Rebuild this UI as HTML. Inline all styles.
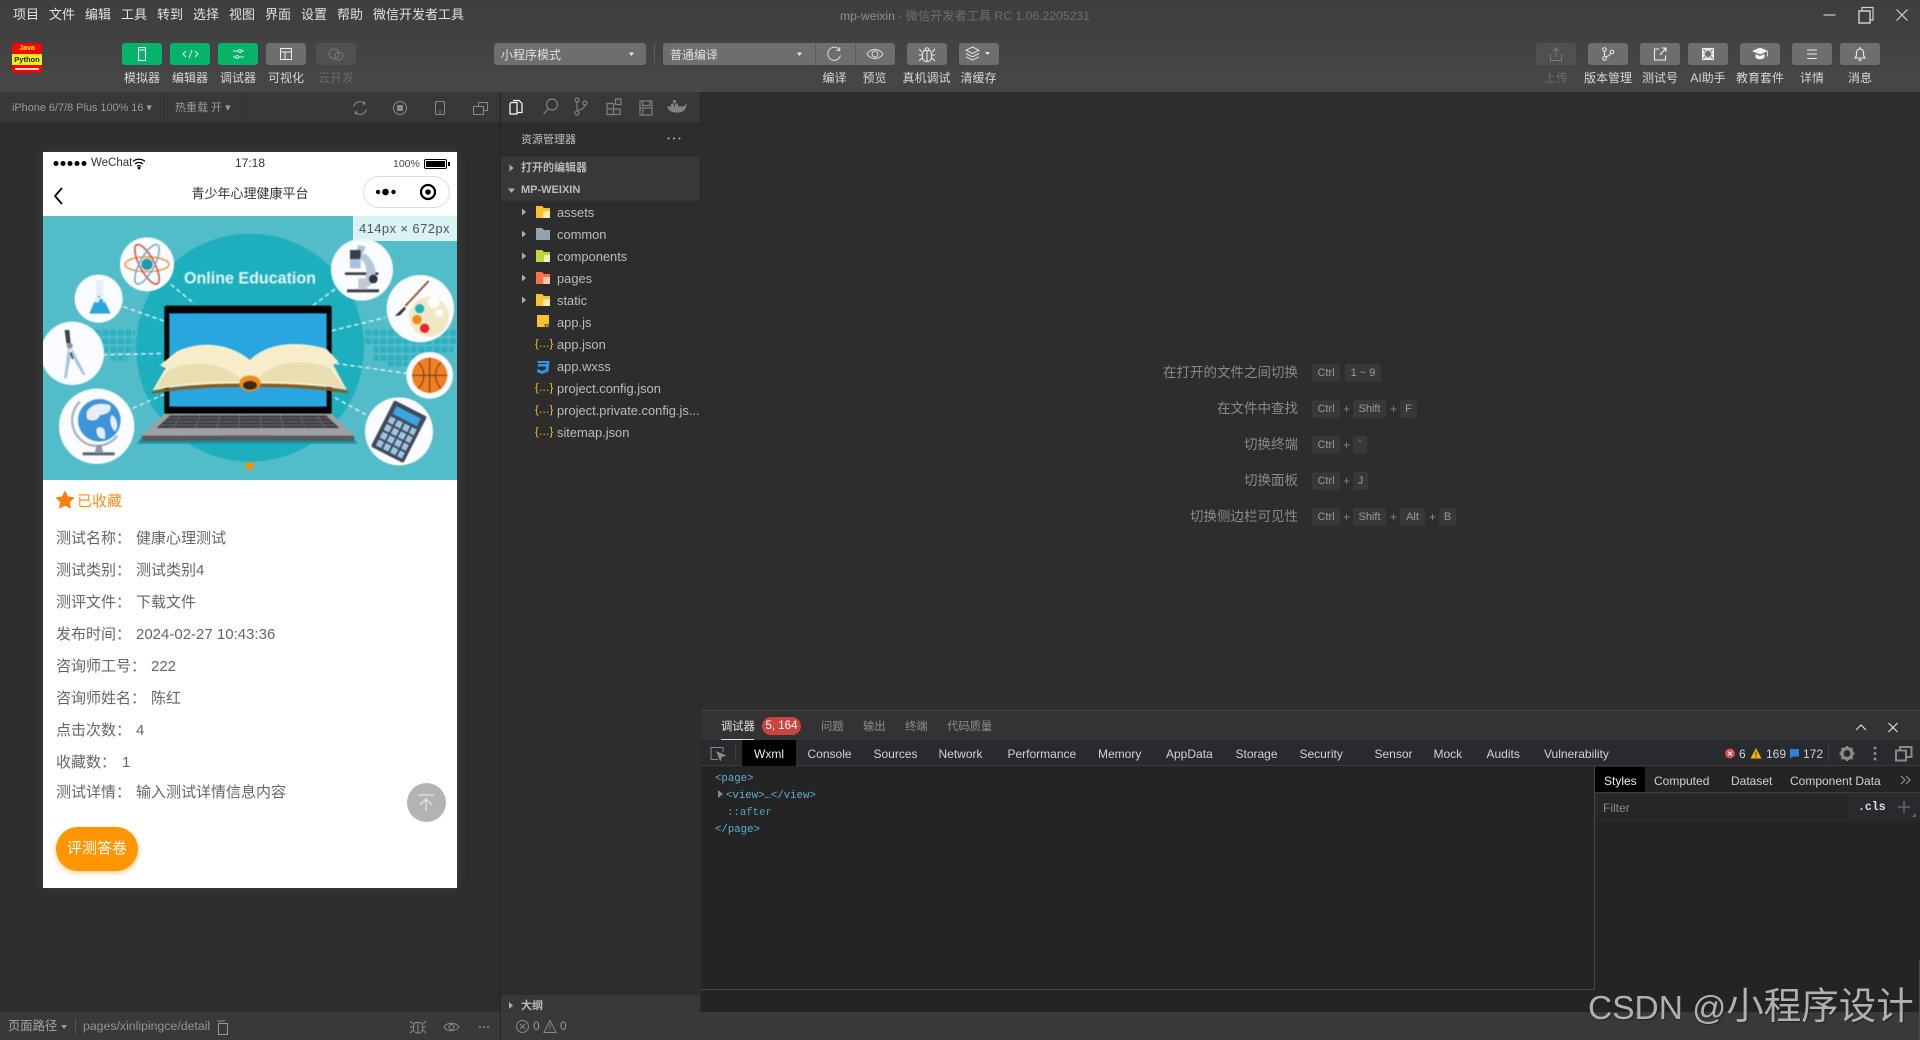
<!DOCTYPE html>
<html lang="zh"><head><meta charset="utf-8"><title>mp-weixin</title>
<style>
*{box-sizing:border-box}
html,body{margin:0;padding:0;width:1920px;height:1040px;overflow:hidden;background:#2d2d2d}
body{position:relative;font-family:"Liberation Sans","Noto Sans CJK SC",sans-serif;color:#ccc}
.a,.t{position:absolute}
.t{white-space:nowrap;line-height:20px;height:20px}
.c{transform:translateX(-50%)}
.r{transform:translateX(-100%)}
svg{position:absolute;overflow:visible}
.m{font-size:13px;color:#e2e2e2;top:5px}
.l{font-size:12px;color:#d8d8d8;top:68px}
.b{position:absolute;top:43px;height:22px;border-radius:3px;background:#6e6e6e}
.g{background:#07b26a}
.f{font-size:12.900px;color:#b9bdc0;left:557px;margin-top:1px}
.k{position:absolute;height:18px;line-height:18px;background:#383838;border-radius:2px;font-size:11px;color:#9a9a9a;text-align:center}
.kl{font-size:13.500px;color:#8a8a8a;left:1298px;transform:translateX(-100%);margin-top:1px}
.p{font-size:11px;color:#9a9a9a;margin-top:1px}
.d{font-size:12px;color:#cfd3d6;top:744px}
.x{font-family:"Liberation Mono",monospace;font-size:10.700px;color:#5db0d7;margin-top:1px}
.q{font-size:15px;color:#666;left:56px;margin-top:1px}
.v{font-size:15px;color:#666;margin-top:1px}
.tb{font-size:11.300px;color:#8f8f8f;top:717px}
</style></head><body>

<!-- top bars -->
<div class="a" style="left:0;top:0;width:1920px;height:92px;background:linear-gradient(#3e3e3e,#474747)"></div>
<div class="a" style="left:0;top:92px;width:700px;height:30px;background:#383838"></div>
<div class="a" style="left:163px;top:92px;width:1px;height:30px;background:#343434"></div>
<div class="a" style="left:242px;top:92px;width:1px;height:30px;background:#343434"></div>
<div class="a" style="left:500px;top:92px;width:1px;height:948px;background:#232323"></div>
<div class="a" style="left:700px;top:92px;width:1px;height:618px;background:#282828"></div>

<span class="t m" style="left:13px">项目</span><span class="t m" style="left:49px">文件</span><span class="t m" style="left:85px">编辑</span><span class="t m" style="left:121px">工具</span><span class="t m" style="left:157px">转到</span><span class="t m" style="left:193px">选择</span><span class="t m" style="left:229px">视图</span><span class="t m" style="left:265px">界面</span><span class="t m" style="left:301px">设置</span><span class="t m" style="left:337px">帮助</span><span class="t m" style="left:373px">微信开发者工具</span>
<span class="t" style="left:840px;top:6px;font-size:12.200px;color:#8d8f92">mp-weixin <span style="color:#6f6f6f">- 微信开发者工具 RC 1.06.2205231</span></span>

<!-- window controls -->
<svg style="left:1820px;top:4px" width="100" height="24" fill="none" stroke="#d0d0d0" stroke-width="1.200">
<path d="M3.500 11h12" stroke="#aaa" stroke-width="1.600"/>
<path d="M39 7h11v12h-11z" stroke-width="1.400"/><path d="M42 7V3.500h11V16h-3" stroke-width="1.200"/>
<path d="M76.500 5.500l11 11M87.500 5.500l-11 11"/></svg>

<!-- logo -->
<div class="a" style="left:12px;top:43px;width:30px;height:30px;background:#f00;border-radius:3px;overflow:hidden">
<div class="a" style="left:0;top:11px;width:30px;height:11px;background:#f3ee1b"></div>
<span class="a" style="left:0;width:30px;text-align:center;top:1px;font-size:7px;line-height:9px;font-weight:bold;color:#ff0">Java</span>
<span class="a" style="left:0;width:30px;text-align:center;top:12px;font-size:7.500px;line-height:9px;font-weight:bold;color:#222">Python</span>
<div class="a" style="left:3px;top:25px;width:24px;height:1.500px;background:#fff;opacity:.85"></div>
</div>

<!-- left buttons -->
<div class="b g" style="left:122px;width:40px"><svg style="left:16px;top:4px" width="9" height="14" fill="none" stroke="#fff" stroke-width="1"><rect x=".5" y=".5" width="7" height="13"/><path d="M.5 3h7"/></svg></div>
<div class="b g" style="left:170px;width:40px"><svg style="left:12px;top:6px" width="17" height="10" fill="none" stroke="#fff" stroke-width="1"><path d="M4 2L1 5l3 3M13 2l3 3-3 3M10 1L7 9"/></svg></div>
<div class="b g" style="left:218px;width:40px"><svg style="left:15px;top:5px" width="11" height="12" fill="none" stroke="#d8f5e6" stroke-width="1"><path d="M0 3h5M9 3h2M0 9h2M6 9h5"/><circle cx="7" cy="3" r="1.500"/><circle cx="4" cy="9" r="1.500"/></svg></div>
<div class="b" style="left:266px;width:40px"><svg style="left:14px;top:5px" width="13" height="13" fill="none" stroke="#eee" stroke-width="1"><rect x=".5" y=".5" width="11" height="11"/><path d="M.5 4h11M5 4v7.500"/></svg></div>
<div class="b" style="left:316px;width:40px;background:#505050"><svg style="left:12px;top:5px" width="16" height="13" fill="none" stroke="#7a7a7a" stroke-width="1"><circle cx="6" cy="6" r="5"/><circle cx="11" cy="8" r="4"/></svg></div>
<span class="t l c" style="left:142px">模拟器</span><span class="t l c" style="left:190px">编辑器</span><span class="t l c" style="left:238px">调试器</span><span class="t l c" style="left:286px">可视化</span><span class="t l c" style="left:336px;color:#6b6b6b">云开发</span>

<!-- mode selects -->
<div class="b" style="left:494px;width:152px"></div>
<span class="t" style="left:501px;top:45px;font-size:12px;color:#e0e0e0;height:20px">小程序模式</span>
<svg style="left:628px;top:52px" width="8" height="5" fill="#e8e8e8"><path d="M1 .5h5L3.500 4z"/></svg>
<div class="a" style="left:654px;top:43px;width:1px;height:22px;background:#5a5a5a"></div>
<div class="b" style="left:663px;width:232px"></div>
<div class="a" style="left:815px;top:43px;width:1px;height:22px;background:#5c5c5c"></div>
<div class="a" style="left:855px;top:43px;width:1px;height:22px;background:#5c5c5c"></div>
<span class="t" style="left:670px;top:45px;font-size:12px;color:#e0e0e0">普通编译</span>
<svg style="left:796px;top:52px" width="8" height="5" fill="#e8e8e8"><path d="M1 .5h5L3.500 4z"/></svg>
<svg style="left:826px;top:46px" width="18" height="16" fill="none" stroke="#ddd" stroke-width="1"><path d="M13.500 4A6.500 6.500 0 1 0 14.500 9.500"/><path d="M13.800 1v3.500h-3.500"/></svg>
<svg style="left:866px;top:47px" width="18" height="14" fill="none" stroke="#ddd" stroke-width="1"><path d="M1 7c4-6 12-6 16 0-4 6-12 6-16 0z"/><circle cx="9" cy="7" r="3"/></svg>
<div class="b" style="left:907px;width:40px"></div>
<svg style="left:918px;top:46px" width="18" height="17" fill="none" stroke="#e4e4e4" stroke-width="1.100"><path d="M6 4.500h6l1.500 3v4.500c0 2-2 3.500-4.500 3.500S4.500 14 4.500 12V7.500zM7 4c0-3 4-3 4 0M9 5v10M1 3l3 3M17 3l-3 3M1 9h3M14 9h3M1 15l3-3M17 15l-3-3"/></svg>
<div class="b" style="left:959px;width:40px"></div>
<svg style="left:965px;top:46px" width="28" height="16" fill="none" stroke="#e4e4e4" stroke-width="1"><path d="M7.500 1L14 4.200 7.500 7.500 1 4.200zM1 7.500l6.500 3.300L14 7.500M1 10.800l6.500 3.300 6.500-3.300"/><path d="M20 6h5l-2.500 3z" fill="#e4e4e4" stroke="none"/></svg>
<span class="t l c" style="left:834.500px">编译</span><span class="t l c" style="left:874.500px">预览</span><span class="t l c" style="left:926.500px">真机调试</span><span class="t l c" style="left:978.500px">清缓存</span>

<!-- right buttons -->
<div class="b" style="left:1536px;width:40px;background:#505050"></div><div class="b" style="left:1588px;width:40px"></div><div class="b" style="left:1640px;width:40px"></div><div class="b" style="left:1688px;width:40px"></div><div class="b" style="left:1740px;width:40px"></div><div class="b" style="left:1792px;width:40px"></div><div class="b" style="left:1840px;width:40px"></div>
<svg style="left:1536px;top:43px" width="40" height="22" fill="none" stroke="#7c7c7c" stroke-width="1"><path d="M14.500 11v6.500h11V11M20 14V5M17 8l3-3 3 3"/></svg>
<svg style="left:1588px;top:43px" width="40" height="22" fill="none" stroke="#eee" stroke-width="1"><circle cx="16.500" cy="6.500" r="1.800"/><circle cx="16.500" cy="15.500" r="1.800"/><circle cx="24" cy="9" r="1.800"/><path d="M16.500 8.300v5.400M18 13.500c3 0 4-1.500 4.500-3.500"/></svg>
<svg style="left:1640px;top:43px" width="40" height="22" fill="none" stroke="#eee" stroke-width="1.100"><path d="M19 6h-4.500v11h11v-4.500M20 12l6-7M22 5h4v4"/></svg>
<svg style="left:1688px;top:43px" width="40" height="22" fill="none" stroke="#eee" stroke-width="1"><rect x="14.500" y="5.500" width="11" height="11"/><ellipse cx="20" cy="11" rx="5.500" ry="3.500" transform="rotate(45 20 11)"/><ellipse cx="20" cy="11" rx="5.500" ry="3.500" transform="rotate(-45 20 11)"/></svg>
<svg style="left:1740px;top:43px" width="40" height="22" fill="#f2f2f2"><path d="M12 8l8-3.500L28 8l-8 3.500z"/><path d="M15.500 11v3.500c2.500 2.500 6.500 2.500 9 0V11L20 13zM27 8.500h.8v5H27z"/></svg>
<svg style="left:1792px;top:43px" width="40" height="22" fill="none" stroke="#eee" stroke-width="1.100"><path d="M15 7h10M15 11h10M15 15.500h10"/></svg>
<svg style="left:1840px;top:43px" width="40" height="22" fill="none" stroke="#eee" stroke-width="1.100"><path d="M15 15c1.500-1.500 1.500-3 1.500-5.500a3.500 3.500 0 0 1 7 0c0 2.500 0 4 1.500 5.500zM20 4v2"/><path d="M18.500 17h3" stroke-width="1.500"/></svg>
<span class="t l c" style="left:1556px;color:#6b6b6b">上传</span><span class="t l c" style="left:1608px">版本管理</span><span class="t l c" style="left:1660px">测试号</span><span class="t l c" style="left:1708px">AI助手</span><span class="t l c" style="left:1760px">教育套件</span><span class="t l c" style="left:1812px">详情</span><span class="t l c" style="left:1860px">消息</span>

<!-- sub toolbar -->
<span class="t p" style="left:12px;top:97px;font-size:10.900px">iPhone 6/7/8 Plus 100% 16 ▾</span>
<span class="t p" style="left:175px;top:97px;font-size:11px">热重载 开 ▾</span>
<svg style="left:350px;top:97px" width="140" height="20" fill="none" stroke="#8a8a8a" stroke-width="1">
<path d="M3.700 9.500A6.500 6.500 0 0 1 14.500 6.500M14.800 4.500v2.500h-2.500M16.300 12.500A6.500 6.500 0 0 1 5.500 15.500M5.200 17.500v-2.500h2.500"/>
<circle cx="50" cy="11" r="6.500"/><rect x="47" y="8" width="6" height="6" fill="#8a8a8a" stroke="none"/>
<rect x="85.500" y="4.500" width="9" height="13" rx="1"/><path d="M88.500 15h3"/>
<rect x="128.500" y="5.500" width="9" height="8"/><rect x="123.500" y="9.500" width="10" height="8" fill="#383838"/></svg>
<svg style="left:508px;top:96px" width="185" height="22" fill="none" stroke="#808080" stroke-width="1.200">
<path d="M5 4.500h6l3 3v9h-5" stroke="#fff"/><path d="M3 6.500h6v11.500h-7v-10z" stroke="#fff"/>
<g transform="translate(-1 0)"><circle cx="45" cy="8.500" r="5.500"/><path d="M41 13l-4.500 5"/></g>
<g transform="translate(3 0)"><circle cx="66" cy="4" r="2"/><circle cx="66" cy="17" r="2"/><circle cx="74" cy="7" r="2"/><path d="M66 6v9M67.500 14c4 0 5.500-2 6.500-5"/></g>
<g transform="translate(3 0)"><path d="M96 7.500h6.500v5.500H96zM96 13h6.500v5.500H96zM102.500 13H109v5.500h-6.500zM104.500 3h5.500v5.500h-5.500z"/></g>
<g transform="translate(1 0)"><path d="M131 5h12v14h-12zM133.500 5v4.500h7.500V5M131 12h12M134 12v7"/></g>
<g transform="translate(-1 0)"><path d="M161 11h15c1 0 3-1 3-3 0 5-3 8-9 8s-8-2-9-5z" fill="#808080"/><rect x="164" y="7.500" width="3" height="3" fill="#808080" stroke="none"/><rect x="168" y="7.500" width="3" height="3" fill="#808080" stroke="none"/><rect x="166" y="4" width="3" height="3" fill="#808080" stroke="none"/></g></svg>

<!-- explorer -->
<span class="t" style="left:521px;top:130px;font-size:11px;color:#c2c2c2">资源管理器</span>
<svg style="left:666px;top:136px" width="16" height="6" fill="#bbb"><circle cx="2.500" cy="2.500" r="1"/><circle cx="8" cy="2.500" r="1"/><circle cx="13.500" cy="2.500" r="1"/></svg>
<div class="a" style="left:501px;top:157px;width:199px;height:44px;background:#383838"></div>
<span class="t" style="left:521px;top:158px;font-size:11px;font-weight:bold;color:#b8b8b8">打开的编辑器</span>
<span class="t" style="left:521px;top:180px;font-size:11px;font-weight:bold;color:#b8bcc0">MP-WEIXIN</span>
<svg style="left:507px;top:160px" width="28" height="240" fill="#a8a8a8"><path d="M2.500 4.500l4 3.500-4 3.500zM1 28.500h7L4.500 33zM15 48.500l4 3.500-4 3.500zM15 70.500l4 3.500-4 3.500zM15 92.500l4 3.500-4 3.500zM15 114.500l4 3.500-4 3.500zM15 136.500l4 3.500-4 3.500z" fill="#9fb4c4"/></svg>

<svg style="left:536px;top:205px" width="16" height="240" stroke="none">
<path d="M0 1h6l2 2h6v10H0z" fill="#fbc02d"/><rect x="7" y="6" width="7" height="7" fill="#ffe9a8"/>
<path d="M0 23h6l2 2h6v10H0z" fill="#90a4ae"/>
<path d="M0 45h6l2 2h6v10H0z" fill="#c5d33a"/><rect x="8" y="50" width="6" height="7" fill="#eef3b5"/>
<path d="M0 67h6l2 2h6v10H0z" fill="#ff7043"/><rect x="7" y="72" width="7" height="7" fill="#ffc5b0"/>
<path d="M0 89h6l2 2h6v10H0z" fill="#fbc02d"/><rect x="7" y="94" width="7" height="7" fill="#ffe9a8"/>
<rect x="1" y="110" width="12" height="12" fill="#fbc02d"/>
<path d="M1.500 156h12l-1 10.500-6.500 2.500-5-2 .4-3 4.600 1.700 3.700-1.500.4-2.700H1.800l.3-2.500h8.500l.3-1H1.500z" fill="#2d97e5"/>
</svg>
<span class="t" style="font-size:5.500px;font-weight:bold;color:#333;left:543px;top:317px">JS</span>
<span class="t f" style="top:202px">assets</span><span class="t f" style="top:224px">common</span><span class="t f" style="top:246px">components</span><span class="t f" style="top:268px">pages</span><span class="t f" style="top:290px">static</span><span class="t f" style="top:312px">app.js</span><span class="t f" style="top:334px">app.json</span><span class="t f" style="top:356px">app.wxss</span><span class="t f" style="top:378px">project.config.json</span><span class="t f" style="top:400px">project.private.config.js...</span><span class="t f" style="top:422px">sitemap.json</span>
<span class="t" style="left:535px;top:334px;font-size:11px;color:#fbc02d">{…}</span>
<span class="t" style="left:535px;top:378px;font-size:11px;color:#fbc02d">{…}</span>
<span class="t" style="left:535px;top:400px;font-size:11px;color:#fbc02d">{…}</span>
<span class="t" style="left:535px;top:422px;font-size:11px;color:#fbc02d">{…}</span>

<div class="a" style="left:501px;top:995px;width:199px;height:17px;background:#383838"></div>
<svg style="left:509px;top:1002px" width="6" height="8" fill="#9fb4c4"><path d="M0 0l4 3.500L0 7z"/></svg>
<span class="t" style="left:521px;top:998px;font-size:11px;height:17px;line-height:17px;font-weight:bold;color:#bbb">大纲</span>

<!-- Shortcuts -->
<span class="t kl" style="top:362px">在打开的文件之间切换</span><span class="t kl" style="top:398px">在文件中查找</span><span class="t kl" style="top:434px">切换终端</span><span class="t kl" style="top:470px">切换面板</span><span class="t kl" style="top:506px">切换侧边栏可见性</span>
<div class="k" style="left:1312px;top:364px;width:28px">Ctrl</div><div class="k" style="left:1345px;top:364px;width:36px">1 ~ 9</div>
<div class="k" style="left:1312px;top:400px;width:28px">Ctrl</div><span class="t" style="left:1343px;top:399px;font-size:12px;color:#888">+</span><div class="k" style="left:1353px;top:400px;width:33px">Shift</div><span class="t" style="left:1390px;top:399px;font-size:12px;color:#888">+</span><div class="k" style="left:1400px;top:400px;width:17px">F</div>
<div class="k" style="left:1312px;top:436px;width:28px">Ctrl</div><span class="t" style="left:1343px;top:435px;font-size:12px;color:#888">+</span><div class="k" style="left:1353px;top:436px;width:14px">`</div>
<div class="k" style="left:1312px;top:472px;width:28px">Ctrl</div><span class="t" style="left:1343px;top:471px;font-size:12px;color:#888">+</span><div class="k" style="left:1353px;top:472px;width:15px">J</div>
<div class="k" style="left:1312px;top:508px;width:28px">Ctrl</div><span class="t" style="left:1343px;top:507px;font-size:12px;color:#888">+</span><div class="k" style="left:1353px;top:508px;width:33px">Shift</div><span class="t" style="left:1390px;top:507px;font-size:12px;color:#888">+</span><div class="k" style="left:1400px;top:508px;width:25px">Alt</div><span class="t" style="left:1429px;top:507px;font-size:12px;color:#888">+</span><div class="k" style="left:1439px;top:508px;width:17px">B</div>

<!-- debug panel -->
<div class="a" style="left:701px;top:710px;width:1219px;height:30px;background:#333;border-top:1px solid #444"></div>
<span class="t tb" style="left:721px;color:#e2e2e2">调试器</span><div class="a" style="left:721px;top:739px;width:33px;height:1px;background:#ddd"></div>
<div class="a" style="left:762px;top:717px;width:39px;height:18px;border-radius:9px;background:#c9453d;color:#fff;font-size:11.500px;line-height:18px;text-align:center">5, 164</div>
<span class="t tb" style="left:821px">问题</span><span class="t tb" style="left:863px">输出</span><span class="t tb" style="left:905px">终端</span><span class="t tb" style="left:947px">代码质量</span>
<svg style="left:1852px;top:721px" width="60" height="14" fill="none" stroke="#ddd" stroke-width="1.200"><path d="M4 9l5-5 5 5M36.500 2l9 9M45.500 2l-9 9"/></svg>
<div class="a" style="left:701px;top:740px;width:1219px;height:26px;background:#292a2d;border-bottom:1px solid #3c3c3c"></div>
<div class="a" style="left:701px;top:766px;width:1219px;height:246px;background:#242424"></div>
<svg style="left:710px;top:746px" width="18" height="16" fill="none" stroke="#8a8a8a" stroke-width="1"><path d="M8 13.500H1V1.500h12V6"/><path d="M7 6l8 3.500-3.500 1.200-1.200 3.500z" fill="#8a8a8a"/></svg>
<div class="a" style="left:735px;top:744px;width:1px;height:18px;background:#3c3c3c"></div>
<div class="a" style="left:742px;top:740px;width:54px;height:26px;background:#000"></div>
<span class="t d" style="left:754px;color:#eee">Wxml</span><span class="t d" style="left:807.500px">Console</span><span class="t d" style="left:873.500px">Sources</span><span class="t d" style="left:938.500px">Network</span><span class="t d" style="left:1007.500px">Performance</span><span class="t d" style="left:1098px">Memory</span><span class="t d" style="left:1166px">AppData</span><span class="t d" style="left:1235.500px">Storage</span><span class="t d" style="left:1299.500px">Security</span><span class="t d" style="left:1374.500px">Sensor</span><span class="t d" style="left:1433.500px">Mock</span><span class="t d" style="left:1486.500px">Audits</span><span class="t d" style="left:1544px">Vulnerability</span>

<svg style="left:1724px;top:747px" width="80" height="14"><circle cx="6" cy="6.500" r="5" fill="#e5484d"/><path d="M4 4.500l4 4M8 4.500l-4 4" stroke="#fff" stroke-width="1.200"/><path d="M32 1l5.500 10.500h-11z" fill="#f4b400"/><path d="M32 4.500v4M32 9.500v1" stroke="#292a2d" stroke-width="1"/><path d="M66 2h9v7.500h-6l-3 2z" fill="#2f7fe0"/></svg>
<span class="t d" style="left:1739px;font-size:12px">6</span><span class="t d" style="left:1766px">169</span><span class="t d" style="left:1803px">172</span>
<div class="a" style="left:1828px;top:744px;width:1px;height:18px;background:#3c3c3c"></div>
<svg style="left:1838px;top:745px" width="78" height="18" fill="#8a8a8a"><circle cx="9" cy="8.500" r="5" fill="none" stroke="#8a8a8a" stroke-width="3.200"/><path d="M9 1v3M9 13v3M1.500 8.500h3M13.500 8.500h3M3.500 3l2 2M12.500 12l2 2M14.500 3l-2 2M5.500 12l-2 2" stroke="#8a8a8a" stroke-width="2"/><circle cx="37" cy="3" r="1.500"/><circle cx="37" cy="8.500" r="1.500"/><circle cx="37" cy="14" r="1.500"/><path d="M58 5.500h10v10H58zM62 5V2h11.500v10H69" fill="none" stroke="#8a8a8a" stroke-width="2"/></svg>

<span class="t x" style="left:715px;top:768px">&lt;page&gt;</span>
<svg style="left:718px;top:790px" width="6" height="9" fill="#888"><path d="M0 0l5 4-5 4z"/></svg>
<span class="t x" style="left:726px;top:785px">&lt;view&gt;<span style="color:#aaa">…</span>&lt;/view&gt;</span>
<span class="t x" style="left:727px;top:802px;color:#4f9fb8">::after</span>
<span class="t x" style="left:715px;top:819px">&lt;/page&gt;</span>

<div class="a" style="left:701px;top:989px;width:894px;height:1px;background:#484848"></div>
<div class="a" style="left:1594px;top:766px;width:1px;height:224px;background:#444"></div>
<div class="a" style="left:1595px;top:793px;width:325px;height:28px;background:#292a2d"></div>
<div class="a" style="left:1595px;top:792px;width:325px;height:1px;background:#3c3c3c"></div>
<div class="a" style="left:1598px;top:795px;width:250px;height:24px;background:#262626"></div>
<div class="a" style="left:1595px;top:767px;width:50px;height:25px;background:#000"></div>
<span class="t d" style="left:1604px;top:771px;color:#eee">Styles</span><span class="t d" style="left:1654px;top:771px">Computed</span><span class="t d" style="left:1731px;top:771px">Dataset</span><span class="t d" style="left:1790px;top:771px">Component Data</span>
<svg style="left:1900px;top:775px" width="12" height="10" fill="none" stroke="#999"><path d="M1 1l4 4-4 4M6 1l4 4-4 4"/></svg>
<span class="t" style="left:1603px;top:798px;font-size:12px;color:#8a8a8a">Filter</span>
<span class="t x" style="left:1858px;top:797px;font-size:11.500px;font-weight:bold;color:#ddd">.cls</span>
<svg style="left:1897px;top:800px" width="20" height="18" fill="none" stroke="#666" stroke-width="1.500"><path d="M7 1v12M1 7h12"/><path d="M19 13v4h-4z" fill="#666" stroke="none"/></svg>

<!-- status bar -->
<div class="a" style="left:0;top:1012px;width:1920px;height:28px;background:#393939"></div>
<div class="a" style="left:500px;top:1012px;width:1px;height:28px;background:#232323"></div>
<span class="t p" style="left:8px;top:1015px;font-size:12.300px;color:#a5a5a5">页面路径</span>
<svg style="left:61px;top:1025px" width="7" height="5" fill="#999"><path d="M0 0h6L3 4z"/></svg>
<div class="a" style="left:75px;top:1019px;width:1px;height:15px;background:#555"></div>
<span class="t p" style="left:83px;top:1015px;font-size:12.300px;color:#949494">pages/xinlipingce/detail</span>
<svg style="left:216px;top:1020px" width="14" height="15" fill="none" stroke="#999" stroke-width="1"><path d="M2.500 3.500h9v11h-9zM1 1h8"/></svg>
<svg style="left:409px;top:1018px" width="95" height="17" fill="none" stroke="#8a8a8a" stroke-width="1"><path d="M6 4.500h6l1.500 3v4c0 2-2 3.500-4.500 3.500S4.500 13.500 4.500 11.500v-4zM9 5v10M1 3l3 3M17 3l-3 3M1 9h3M14 9h3M1 15l3-3M17 15l-3-3"/><path d="M35 9c3-5 11-5 15 0-4 5-12 5-15 0z"/><circle cx="42.500" cy="9" r="2.500"/><circle cx="71" cy="9" r="1" fill="#8a8a8a" stroke="none"/><circle cx="75" cy="9" r="1" fill="#8a8a8a" stroke="none"/><circle cx="79" cy="9" r="1" fill="#8a8a8a" stroke="none"/></svg>
<svg style="left:516px;top:1019px" width="60" height="15" fill="none" stroke="#8a8a8a" stroke-width="1"><circle cx="6.500" cy="7.500" r="6"/><path d="M4 5l5 5M9 5l-5 5M34 1.500l6 12H28zM34 5.500v4M34 11v1"/></svg>
<span class="t p" style="left:533px;top:1015px;font-size:12px">0</span><span class="t p" style="left:560px;top:1015px;font-size:12px">0</span>

<!-- simulator phone -->
<div class="a" style="left:43px;top:152px;width:414px;height:736px;background:#fff;box-shadow:0 0 14px rgba(255,255,255,.09)"></div>
<svg style="left:53px;top:160px" width="36" height="7" fill="#000"><circle cx="3" cy="3.500" r="2.500"/><circle cx="10" cy="3.500" r="2.500"/><circle cx="17" cy="3.500" r="2.500"/><circle cx="24" cy="3.500" r="2.500"/><circle cx="31" cy="3.500" r="2.500"/></svg>
<span class="t" style="left:91px;top:153px;font-size:11.500px;color:#333">WeChat</span>
<svg style="left:132px;top:158px" width="14" height="11" fill="none" stroke="#000" stroke-width="1.200"><path d="M1 3.500c3-3 9-3 12 0M3 6c2-2 6-2 8 0M5 8.300c1-1 3-1 4 0"/><circle cx="7" cy="10" r=".8" fill="#000"/></svg>
<span class="t c" style="left:250px;top:153px;font-size:12px;color:#333">17:18</span>
<span class="t" style="left:393px;top:154px;font-size:10.500px;color:#444">100%</span>
<div class="a" style="left:424px;top:159px;width:23px;height:10px;border:1px solid #000;border-radius:2px;padding:1px"><div style="width:100%;height:100%;background:#000"></div></div>
<div class="a" style="left:448px;top:162px;width:1.500px;height:4px;background:#000"></div>
<span class="t c" style="left:250px;top:184px;font-size:13px;color:#333">青少年心理健康平台</span>
<svg style="left:52px;top:186px" width="13" height="20" fill="none" stroke="#000" stroke-width="1.800"><path d="M10 2L3 10l7 8"/></svg>
<div class="a" style="left:363px;top:176px;width:87px;height:32px;border:1px solid #ddd;border-radius:16px;background:#fff"></div>
<svg style="left:373px;top:182px" width="72" height="20"><circle cx="5" cy="10" r="2.200"/><circle cx="12.500" cy="10" r="3.300"/><circle cx="20.500" cy="10" r="2.200"/><circle cx="55" cy="10" r="7" fill="none" stroke="#000" stroke-width="2.200"/><circle cx="55" cy="10" r="2.800"/></svg>

<!-- swiper image -->
<div class="a" style="left:43px;top:216px;width:414px;height:264px;overflow:hidden;background:#52bdc9">
<svg style="left:-3px;top:-1px;filter:blur(.45px)" width="420" height="270" viewBox="0 0 1260 810">
<rect width="1260" height="810" fill="#52bdc9"/>
<circle cx="630" cy="398" r="342" fill="#1dafbe"/>
<g fill="#2db0c1"><path d="M165 345h120v17H165zM165 370h120v17H165zM165 395h120v17H165zM212 420h50v17h-50z" stroke="#52bdc9" stroke-width="0"/>
<path d="M975 345h275v17H975zM975 370h275v17H975zM1000 395h240v17h-240zM1000 420h180v17h-180zM1040 440h100v14h-100z"/></g>
<g stroke="#52bdc9" stroke-width="5"><path d="M185 340v100M208 340v100M231 340v100M254 340v100M277 340v100M995 340v120M1018 340v120M1041 340v120M1064 340v120M1087 340v120M1110 340v120M1133 340v120M1156 340v120M1179 340v120M1202 340v120M1225 340v120"/></g>
<g stroke="#e6f6f7" stroke-width="4" stroke-dasharray="14 9" fill="none"><path d="M392 208L465 268M250 275L372 318M188 420L372 415M278 580L372 538M885 222L818 272M875 347L1035 308M885 445L1100 475M885 548L985 603"/></g>
<g fill="#fbfcff"><circle cx="321" cy="148" r="81"/><circle cx="176" cy="251" r="72"/><circle cx="97" cy="415" r="95"/><circle cx="170" cy="634" r="113"/><circle cx="966" cy="164" r="93"/><circle cx="1141" cy="281" r="101"/><circle cx="1169" cy="481" r="70"/><circle cx="1077" cy="649" r="102"/></g>
<!-- atom -->
<g fill="none" stroke-width="5"><ellipse cx="321" cy="148" rx="66" ry="22" stroke="#ef9a4a"/><ellipse cx="321" cy="148" rx="66" ry="22" stroke="#d9534a" transform="rotate(62 321 148)"/><ellipse cx="321" cy="148" rx="66" ry="22" stroke="#7aaccc" transform="rotate(-62 321 148)"/></g><circle cx="321" cy="148" r="17" fill="#1f9aa6"/>
<!-- flask -->
<path d="M168 196h22v50l22 50h-64l20-50z" fill="#e3eef6"/><path d="M162 262h34l16 34h-64z" fill="#2fa5e0"/><circle cx="183" cy="258" r="6" fill="#2fa5e0"/><circle cx="177" cy="245" r="3" fill="#2fa5e0"/>
<!-- compass -->
<path d="M74 345l14 0 4 40h-13z" fill="#3c4048"/><path d="M84 400L72 490 80 490 96 405zM96 400l40 78-7 3-43-75z" fill="#a9c3de"/><circle cx="89" cy="392" r="9" fill="#7f93a8"/><path d="M92 412l6 20" stroke="#333" stroke-width="4"/>
<!-- globe -->
<path d="M120 560a78 78 0 0 0 30 130" fill="none" stroke="#a7b3bf" stroke-width="7"/><path d="M150 690a78 78 0 0 0 82-28" fill="none" stroke="#a7b3bf" stroke-width="7"/><circle cx="178" cy="616" r="64" fill="#3e94d8"/><path d="M140 590c20-30 50-25 70-20 10 20-15 30-30 30-5 20-30 20-40 10zM170 640c15-10 30 0 25 30-10 5-30-5-25-30zM215 600c12 5 25 30 10 50-10-10-20-30-10-50z" fill="#e9eef4"/><rect x="128" y="712" width="96" height="9" fill="#5a6570"/><path d="M170 690h14l6 24h-26z" fill="#8d9aa6"/>
<!-- microscope -->
<g fill="#3a3f47"><rect x="915" y="172" width="100" height="8"/><rect x="921" y="223" width="96" height="9"/></g><path d="M955 90l22 5-12 30-20-8z" fill="#a9c2dc"/><path d="M930 105h32v30h-32z" fill="#3a3f47"/><path d="M930 132h32v28h-32z" fill="#a9c2dc"/><path d="M975 115c40 30 40 80 10 100l-18-8c20-30 14-60-8-80z" fill="#b5c9dd"/><circle cx="1000" cy="192" r="13" fill="#2f3338"/><circle cx="971" cy="200" r="8" fill="#2f3338"/><path d="M955 190h26v34h-26z" fill="#c4c7cc"/>
<!-- palette -->
<path d="M1166 198l-70 75" stroke="#8a5a2a" stroke-width="6"/><path d="M1094 275l-30 28 16-2 18-20z" fill="#2f3338"/><circle cx="1167" cy="305" r="60" fill="#f2e8c8"/><circle cx="1139" cy="281" r="14" fill="#1fb2c2"/><circle cx="1131" cy="314" r="14" fill="#f08a1c"/><circle cx="1154" cy="340" r="14" fill="#ee2028"/><circle cx="1181" cy="262" r="17" fill="#fff"/><circle cx="1198" cy="294" r="11" fill="#fff"/>
<!-- basketball -->
<circle cx="1169" cy="481" r="53" fill="#ef7f22"/><g fill="none" stroke="#6a3a17" stroke-width="3"><path d="M1116 481h106M1169 428v106M1135 442c22 22 22 56 0 78M1203 442c-22 22-22 56 0 78"/></g>
<!-- calc -->
<g transform="rotate(27 1077 649)"><rect x="1022" y="572" width="110" height="156" rx="6" fill="#41495a"/><rect x="1036" y="585" width="82" height="26" fill="#39a6e0"/><g fill="#9cc5e3"><path d="M1034 620h18v20h-18zM1058 620h18v20h-18zM1082 620h18v20h-18zM1106 620h16v20h-16zM1034 646h18v20h-18zM1058 646h18v20h-18zM1082 646h18v20h-18zM1106 646h16v20h-16zM1034 672h18v20h-18zM1058 672h18v20h-18zM1082 672h18v20h-18zM1106 672h16v20h-16zM1034 698h18v20h-18zM1058 698h18v20h-18zM1082 698h18v20h-18zM1106 698h16v20h-16z"/></g></g>
<text x="432" y="206" font-family="Liberation Sans" font-weight="bold" font-size="50" fill="#e2f5f6" textLength="396" lengthAdjust="spacingAndGlyphs">Online Education</text>
<!-- laptop -->
<path d="M292 686h660l-10-16H302z" fill="#0f95a6"/>
<rect x="373" y="272" width="502" height="326" rx="6" fill="#020202"/><rect x="388" y="295" width="472" height="280" fill="#29a6e0"/>
<path d="M373 596h502l67 66H305z" fill="#a0a0a4"/><path d="M390 601h468l40 38H350z" fill="#3d3f44"/>
<g stroke="#85878c" stroke-width="1.500"><path d="M383 610h482M372 620h504M361 630h526M420 601l-20 38M480 601l-15 38M540 601l-10 38M600 601l-5 38M660 601l5 38M720 601l10 38M780 601l15 38M830 601l25 38"/></g>
<rect x="305" y="662" width="637" height="16" fill="#585a5e"/><rect x="550" y="661" width="145" height="4" fill="#5d5f63"/>
<!-- book -->
<path d="M338 526L376 460 360 450 410 410C480 375 570 385 630 435V512C500 505 420 510 338 526Z" fill="#f8edca"/>
<path d="M630 435C690 375 790 380 860 402L895 440 880 450 920 524C830 508 720 505 630 512Z" fill="#f8edca"/>
<path d="M345 520L385 465C470 430 560 445 610 500 500 498 420 505 345 520ZM915 520L870 460C780 425 680 445 650 500 750 498 840 505 915 520Z" fill="#e9deb0"/>
<path d="M335 530C430 510 520 505 610 506L610 516C510 515 430 522 335 536ZM925 528C830 510 740 505 650 506L650 516C750 515 830 522 925 535Z" fill="#8a5a1e"/>
<ellipse cx="630" cy="505" rx="32" ry="24" fill="#f08a1c"/><ellipse cx="630" cy="511" rx="21" ry="13" fill="#3c2a18"/>
<circle cx="629" cy="753" r="12" fill="#f98e00"/>
</svg>
<div class="a" style="left:310px;top:0;width:104px;height:25px;background:rgba(232,247,248,.9)"></div>
<span class="t" style="left:316px;top:3px;font-size:13px;letter-spacing:.4px;color:#555">414px × 672px</span>
</div>

<!-- detail -->
<svg style="left:56px;top:491px" width="20" height="18" fill="#ff7f0e"><path d="M9 .5l2.700 5.500 6 .8-4.400 4.200 1.100 6-5.400-2.900-5.400 2.900 1.100-6L.3 6.800l6-.8z" stroke="#ff7f0e" stroke-linejoin="round"/></svg>
<span class="t" style="left:77px;top:492px;font-size:15px;color:#ff8c1a">已收藏</span>
<span class="t q" style="top:528px">测试名称：</span><span class="t v" style="left:136px;top:528px">健康心理测试</span>
<span class="t q" style="top:560px">测试类别：</span><span class="t v" style="left:136px;top:560px">测试类别4</span>
<span class="t q" style="top:592px">测评文件：</span><span class="t v" style="left:136px;top:592px">下载文件</span>
<span class="t q" style="top:624px">发布时间：</span><span class="t v" style="left:136px;top:624px">2024-02-27 10:43:36</span>
<span class="t q" style="top:656px">咨询师工号：</span><span class="t v" style="left:151px;top:656px">222</span>
<span class="t q" style="top:688px">咨询师姓名：</span><span class="t v" style="left:151px;top:688px">陈红</span>
<span class="t q" style="top:720px">点击次数：</span><span class="t v" style="left:136px;top:720px">4</span>
<span class="t q" style="top:752px">收藏数：</span><span class="t v" style="left:122px;top:752px">1</span>
<span class="t q" style="top:782px">测试详情：</span><span class="t v" style="left:136px;top:782px">输入测试详情信息内容</span>
<div class="a" style="left:406.500px;top:783px;width:39px;height:39px;border-radius:50%;background:#b3b3b3"></div>
<svg style="left:416px;top:793px" width="20" height="20" fill="none" stroke="#ddd" stroke-width="1.600"><path d="M2 2h16M10 18V6M4 12l6-6 6 6"/></svg>
<div class="a" style="left:56px;top:827px;width:82px;height:44px;border-radius:22px;background:#ff9500;box-shadow:0 2px 6px rgba(255,149,0,.45);color:#fff;font-size:15px;line-height:44px;text-align:center">评测答卷</div>

<!-- watermark -->
<span class="t" style="left:1588px;top:978px;height:50px;line-height:50px;font-size:33.500px;color:#b0b0b0;text-shadow:1px 1px 1px #222">CSDN @<span style="font-size:37.500px;font-family:'Noto Sans CJK SC',sans-serif">小程序设计</span></span>
<div class="a" style="left:1919px;top:960px;width:1px;height:80px;background:#4a4a4a"></div>
</body></html>
